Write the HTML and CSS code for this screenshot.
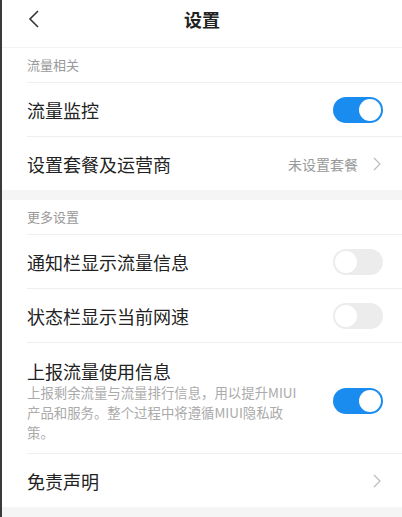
FILE: index.html
```html
<!DOCTYPE html>
<html lang="zh-CN">
<head>
    <meta charset="UTF-8">
    <meta name="viewport" content="width=device-width, initial-scale=1.0">
    <title>设置</title>
    <link rel="stylesheet" href="styles.css">
</head>
<body>
    <div class="page">
        <div class="header">
            <svg class="back" width="12" height="18" viewBox="0 0 12 18">
                <path d="M10 1 L2 9 L10 17" fill="none" stroke="#333" stroke-width="1.6"/>
            </svg>
            <span class="title">设置</span>
        </div>

        <!-- 流量相关 -->
        <div class="group">
            <div class="groupTitle">流量相关</div>
            <div class="row">
                <span class="label">流量监控</span>
                <span class="switch on"></span>
            </div>
            <div class="row">
                <span class="label">设置套餐及运营商</span>
                <span class="value">未设置套餐</span>
                <svg class="arrow" width="8" height="14" viewBox="0 0 8 14">
                    <path d="M1 1 L7 7 L1 13" fill="none" stroke="#bbb" stroke-width="1.2"/>
                </svg>
            </div>
        </div>

        <div class="gap"></div>

        <!-- 更多设置 -->
        <div class="group">
            <div class="groupTitle">更多设置</div>
            <div class="row">
                <span class="label">通知栏显示流量信息</span>
                <span class="switch"></span>
            </div>
            <div class="row">
                <span class="label">状态栏显示当前网速</span>
                <span class="switch"></span>
            </div>
            <div class="row tall">
                <div class="text">
                    <div class="label">上报流量使用信息</div>
                    <div class="desc">上报剩余流量与流量排行信息，用以提升MIUI<br>产品和服务。整个过程中将遵循MIUI隐私政<br>策。</div>
                </div>
                <span class="switch on"></span>
            </div>
            <div class="row">
                <span class="label">免责声明</span>
                <svg class="arrow" width="8" height="14" viewBox="0 0 8 14">
                    <path d="M1 1 L7 7 L1 13" fill="none" stroke="#bbb" stroke-width="1.2"/>
                </svg>
            </div>
        </div>

        <div class="gap bottom"></div>
    </div>
</body>
</html>
```

FILE: styles.css
```css
body {
    margin: 0;
    background-color: #ffffff;
    font-family: "Noto Sans CJK SC", "Noto Sans", sans-serif;
}
.page {
    width: 400px;
    height: 517px;
    border-left: 2px solid #3a3a3a;
    overflow: hidden;
}
.header {
    position: relative;
    height: 47px;
    border-bottom: 1px solid #f3f3f3;
    display: flex;
    justify-content: center;
    align-items: flex-start;
}
.back {
    position: absolute;
    left: 26px;
    top: 10px;
}
.title {
    margin-top: 6px;
    font-size: 18px;
    line-height: 26px;
    font-weight: bold;
    color: #222;
}
.groupTitle {
    height: 34px;
    line-height: 34px;
    padding-left: 25px;
    font-size: 13px;
    color: #999;
}
.row {
    margin-left: 25px;
    padding-right: 19px;
    height: 53px;
    border-top: 1px solid #eeeeee;
    display: flex;
    align-items: center;
}
.row .label {
    flex: 1;
    font-size: 18px;
    color: #222;
}
.row.tall {
    height: auto;
    padding-top: 17px;
    padding-bottom: 11px;
}
.text {
    flex: 1;
}
.text .label {
    line-height: 22px;
}
.desc {
    font-size: 13.4px;
    line-height: 20px;
    color: #aaa;
}
.value {
    font-size: 14px;
    color: #999;
    margin-right: 15px;
}
.arrow {
    margin-right: 2px;
}
.switch {
    position: relative;
    width: 50px;
    height: 26px;
    border-radius: 13px;
    background-color: #ececec;
}
.switch::after {
    content: "";
    position: absolute;
    top: 2px;
    left: 2px;
    width: 22px;
    height: 22px;
    border-radius: 50%;
    background-color: #ffffff;
}
.switch.on {
    background-color: #1a8cf0;
}
.switch.on::after {
    left: 26px;
}
.gap {
    height: 10px;
    background-color: #f5f5f5;
}
.gap.bottom {
    height: 40px;
}
```
